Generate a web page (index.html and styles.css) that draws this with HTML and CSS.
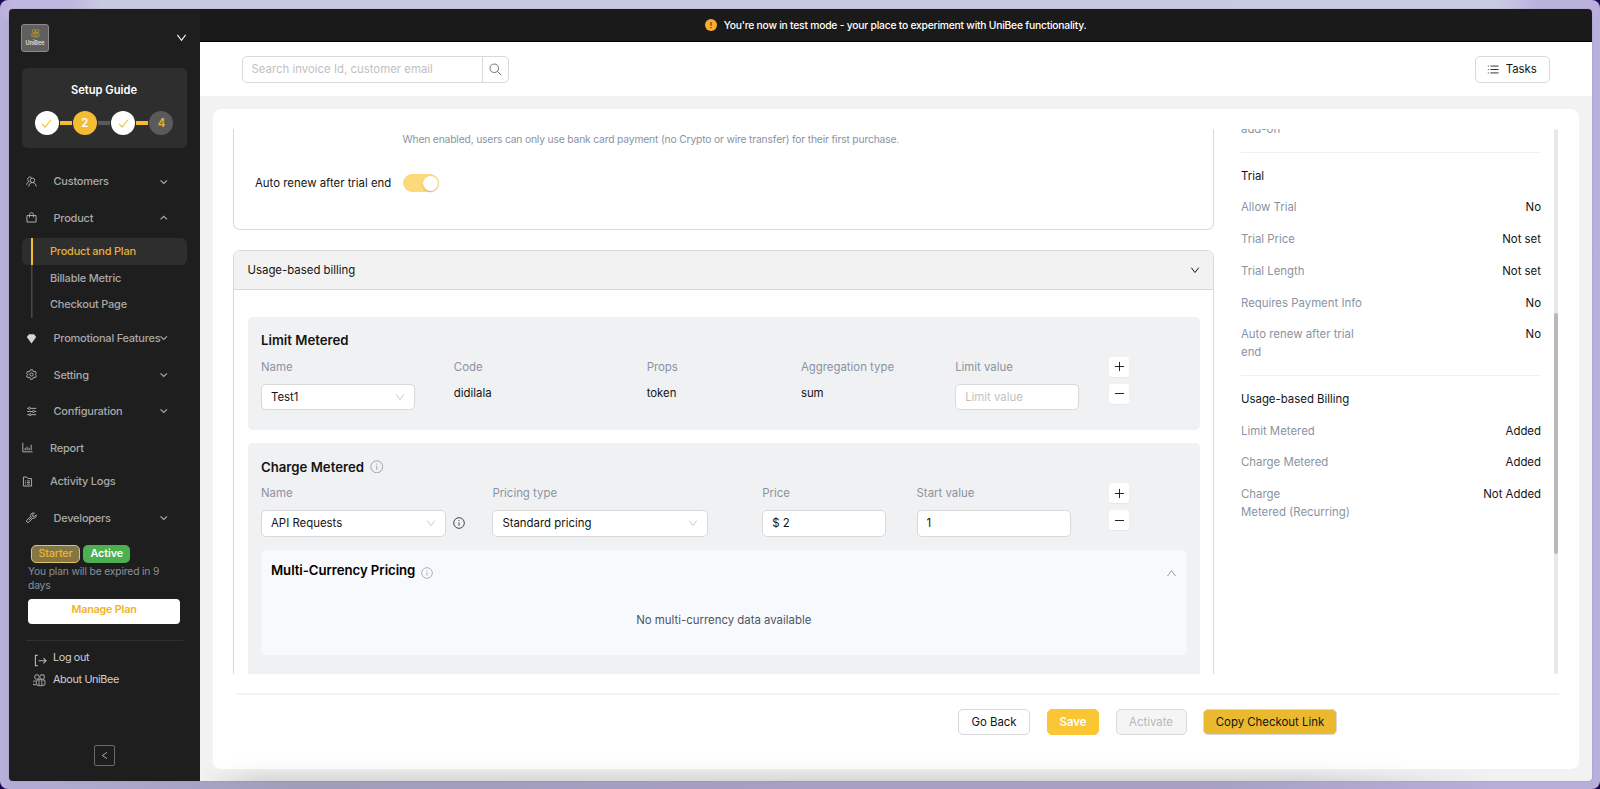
FILE: index.html
```html
<!DOCTYPE html>
<html lang="en">
<head>
  <meta charset="UTF-8">
  <meta name="viewport" content="width=device-width, initial-scale=1.0">
  <title>UniBee - Product and Plan</title>
  <link rel="stylesheet" href="styles.css">
</head>
<body>

  <!-- Shared icons -->
  <svg class="sprite" width="0" height="0">
    <symbol id="i-down" viewBox="0 0 12 12"><path d="M1.5 3.2 6 9l4.500-5.800"/></symbol>
    <symbol id="i-up" viewBox="0 0 12 12"><path d="M1.500 8.800 6 3l4.500 5.800"/></symbol>
    <symbol id="i-menu-down" viewBox="0 0 10 10"><path d="M1.600 3.500 5 6.700l3.400-3.200"/></symbol>
    <symbol id="i-menu-up" viewBox="0 0 10 10"><path d="M1.600 6.700 5 3.500l3.400 3.200"/></symbol>
    <symbol id="i-check" viewBox="0 0 12 12"><path d="m1.200 6.300 3.300 3.600 6.300-8"/></symbol>
    <symbol id="i-info" viewBox="0 0 14 14"><circle cx="7" cy="7" r="6.200"/><path d="M7 6.200v4M7 3.700v1.200"/></symbol>
    <symbol id="i-plus" viewBox="0 0 12 12"><path d="M1 6h10M6 1v10"/></symbol>
    <symbol id="i-minus" viewBox="0 0 12 12"><path d="M1 6h10"/></symbol>
    <symbol id="i-bee" viewBox="0 0 14 14"><circle cx="4.200" cy="3.200" r="2.500"/><circle cx="9.800" cy="3.200" r="2.500"/><rect x="3.500" y="6" width="9.500" height="6.500" rx="3"/><path d="M6.500 6v6.500M9.500 6v6.500M3.500 7.500H1.500a1 1 0 0 0 0 4h2"/></symbol>
  </svg>

  <div class="window">

    <!-- Sidebar -->
    <aside class="sidebar">
      <div class="brand">
        <div class="logo">
          <svg><use href="#i-bee"/></svg>
          <span>UniBee</span>
        </div>
        <svg class="brand-arrow"><use href="#i-down"/></svg>
      </div>

      <div class="setup">
        <h2>Setup Guide</h2>
        <div class="steps">
          <span class="step done"><svg><use href="#i-check"/></svg></span>
          <i class="bar on"></i>
          <span class="step current">2</span>
          <i class="bar"></i>
          <span class="step done"><svg><use href="#i-check"/></svg></span>
          <i class="bar on"></i>
          <span class="step todo">4</span>
        </div>
      </div>

      <nav class="menu">
        <a class="group">
          <svg class="icon" viewBox="0 0 14 14"><circle cx="8.200" cy="5.500" r="2.800"/><path d="M3.500 13.300c.3-3 2-5 4.700-5s4.500 2 4.800 5M3.600 7.400C2 8 1 9.300.8 11.200M4.300 7.200C3 6.800 2.200 5.700 2.200 4.200c0-1.800 1.200-3 2.900-3 .8 0 1.500.3 2 .8"/></svg>
          <span>Customers</span>
          <svg class="arrow"><use href="#i-menu-down"/></svg>
        </a>
        <a class="group">
          <svg class="icon" viewBox="0 0 14 14"><path d="M1.200 4.500h11.600v8.300H1.200zM4.500 6.800V3.200c0-1.300 1-2.200 2.500-2.200s2.500.9 2.500 2.200v3.600"/></svg>
          <span>Product</span>
          <svg class="arrow"><use href="#i-menu-up"/></svg>
        </a>
        <div class="submenu">
          <a class="active">Product and Plan</a>
          <a>Billable Metric</a>
          <a>Checkout Page</a>
        </div>
        <a class="group">
          <svg class="icon gem" viewBox="0 0 14 14"><path d="M3.800 1.500h6.400L13 5 7 13.500 1 5z"/></svg>
          <span>Promotional Features</span>
          <svg class="arrow"><use href="#i-menu-down"/></svg>
        </a>
        <a class="group">
          <svg class="icon" viewBox="0 0 14 14"><path d="m5.500 1-.4 1.900-1.200.7L2 3 .7 5.400l1.500 1.200v1L.7 8.700 2 11l1.900-.6 1.200.7.4 1.900h3l.4-1.900 1.200-.7 1.900.6 1.300-2.300-1.500-1.200v-1l1.500-1.100L12 3l-1.900.6-1.200-.7L8.500 1z"/><circle cx="7" cy="7" r="2"/></svg>
          <span>Setting</span>
          <svg class="arrow"><use href="#i-menu-down"/></svg>
        </a>
        <a class="group">
          <svg class="icon" viewBox="0 0 14 14"><path d="M1.500 3H3M6 3h7M1.500 7H8M11 7h2M1.500 11H4M7 11h6"/><circle cx="4.400" cy="3" r="1.300"/><circle cx="9.500" cy="7" r="1.300"/><circle cx="5.500" cy="11" r="1.300"/></svg>
          <span>Configuration</span>
          <svg class="arrow"><use href="#i-menu-down"/></svg>
        </a>
        <div class="singles">
          <a class="single">
            <svg class="icon" viewBox="0 0 14 14"><path d="M1 1v11.500h12.500M4 10.500V7.500M6.500 10.500V6M9 10.500V7.500M11.700 10.500V3.500"/></svg>
            <span>Report</span>
          </a>
          <a class="single">
            <svg class="icon" viewBox="0 0 14 14"><path d="M1.800 12.800V1.300H6l1.600 2h4.600v9.500zM4 6.200h1M6.500 6.200H10M4 8.300h1M6.500 8.300H10M4 10.400h1M6.500 10.400H10"/></svg>
            <span>Activity Logs</span>
          </a>
        </div>
        <a class="group">
          <svg class="icon" viewBox="0 0 14 14"><path d="M12.900 3.600 10.700 5.700 8.800 5.400 8.400 3.500l2.200-2.200C8.500.700 6.600 1.700 6.100 3.400c-.2.800-.1 1.400.1 2L1.200 10.300a1.700 1.700 0 0 0 2.500 2.500l5-5c2.600.9 5-1.600 4.200-4.200z"/><path d="m4 10 4-4"/></svg>
          <span>Developers</span>
          <svg class="arrow"><use href="#i-menu-down"/></svg>
        </a>
      </nav>

      <div class="plan">
        <div class="tags">
          <span class="tag starter">Starter</span>
          <span class="tag live">Active</span>
        </div>
        <p>You plan will be expired in 9 days</p>
        <button class="manage">Manage Plan</button>
      </div>

      <div class="account">
        <a><svg class="icon" viewBox="0 0 14 14"><path d="M4 1.500H1.500v11H4M5 7.200h8M10.200 4.400 13 7.200 10.200 10"/></svg><span>Log out</span></a>
        <a><svg class="icon bee"><use href="#i-bee"/></svg><span>About UniBee</span></a>
      </div>

      <button class="collapse"><svg viewBox="0 0 10 10"><path d="M7.800 1.500 2.500 5l5.300 3.500"/></svg></button>
    </aside>

    <!-- Main area -->
    <div class="main">
      <div class="notice">
        <svg viewBox="0 0 12 12"><circle cx="6" cy="6" r="6"/><path d="M6 3v3.700M6 7.900v1.300"/></svg>
        <span>You're now in test mode - your place to experiment with UniBee functionality.</span>
      </div>

      <header class="topbar">
        <div class="search">
          <input type="text" placeholder="Search invoice Id, customer email">
          <button><svg viewBox="0 0 14 14"><circle cx="5.700" cy="5.700" r="4.600"/><path d="m9 9 4.200 4.200"/></svg></button>
        </div>
        <button class="btn tasks">
          <svg viewBox="0 0 14 12"><path d="M4 2h9.500M4 6h9.500M4 10h9.500M1 2h1M1 6h1M1 10h1"/></svg>
          <span>Tasks</span>
        </button>
      </header>

      <main class="content">
        <div class="card">
          <div class="scroller">

            <div class="form">
              <section class="panel trial-panel">
                <p class="hint">When enabled, users can only use bank card payment (no Crypto or wire transfer) for their first purchase.</p>
                <div class="switch-row">
                  <label>Auto renew after trial end</label>
                  <span class="switch"></span>
                </div>
              </section>

              <section class="panel usage-panel">
                <div class="panel-head">
                  <span>Usage-based billing</span>
                  <svg><use href="#i-down"/></svg>
                </div>

                <div class="metered limit">
                  <h3>Limit Metered</h3>
                  <div class="grid">
                    <div class="field c5"><label>Name</label>
                      <div class="select w4">Test1<svg><use href="#i-down"/></svg></div></div>
                    <div class="field c5"><label>Code</label><span>didilala</span></div>
                    <div class="field c4"><label>Props</label><span>token</span></div>
                    <div class="field c4"><label>Aggregation type</label><span>sum</span></div>
                    <div class="field c4"><label>Limit value</label>
                      <input class="short" type="text" placeholder="Limit value"></div>
                    <div class="ops c2">
                      <button><svg><use href="#i-plus"/></svg></button>
                      <button><svg><use href="#i-minus"/></svg></button>
                    </div>
                  </div>
                </div>

                <div class="metered charge">
                  <h3>Charge Metered <svg class="info"><use href="#i-info"/></svg></h3>
                  <div class="grid">
                    <div class="field c6"><label>Name</label>
                      <div class="with-info">
                        <div class="select name">API Requests<svg><use href="#i-down"/></svg></div>
                        <svg class="info dark"><use href="#i-info"/></svg>
                      </div></div>
                    <div class="field c7"><label>Pricing type</label>
                      <div class="select pricing">Standard pricing<svg><use href="#i-down"/></svg></div></div>
                    <div class="field c4"><label>Price</label>
                      <input class="short" type="text" value="$ 2"></div>
                    <div class="field c5"><label>Start value</label>
                      <input class="w4" type="text" value="1"></div>
                    <div class="ops c2">
                      <button><svg><use href="#i-plus"/></svg></button>
                      <button><svg><use href="#i-minus"/></svg></button>
                    </div>
                  </div>

                  <div class="currency">
                    <div class="currency-head">
                      <h3>Multi-Currency Pricing <svg class="info"><use href="#i-info"/></svg></h3>
                      <svg class="fold"><use href="#i-up"/></svg>
                    </div>
                    <p>No multi-currency data available</p>
                  </div>
                </div>
              </section>
            </div>

            <!-- Plan summary -->
            <div class="summary">
              <div class="row cut"><span>add-on</span></div>
              <hr>
              <h4>Trial</h4>
              <div class="row"><span>Allow Trial</span><b>No</b></div>
              <div class="row"><span>Trial Price</span><b>Not set</b></div>
              <div class="row"><span>Trial Length</span><b>Not set</b></div>
              <div class="row"><span>Requires Payment Info</span><b>No</b></div>
              <div class="row"><span>Auto renew after trial end</span><b>No</b></div>
              <hr>
              <h4>Usage-based Billing</h4>
              <div class="row"><span>Limit Metered</span><b>Added</b></div>
              <div class="row"><span>Charge Metered</span><b>Added</b></div>
              <div class="row"><span>Charge Metered&nbsp;(Recurring)</span><b>Not Added</b></div>
            </div>

            <div class="scrollbar"><div class="thumb"></div></div>
          </div>

          <footer class="actions">
            <button class="btn back">Go Back</button>
            <button class="btn save">Save</button>
            <button class="btn activate" disabled>Activate</button>
            <button class="btn copy">Copy Checkout Link</button>
          </footer>
        </div>
      </main>
    </div>

    <div class="shade"></div>
  </div>

</body>
</html>
```

FILE: styles.css
```css
* {
  box-sizing: border-box;
  margin: 0;
  padding: 0;
}

html {
  background: #1b0457;
}

body {
  height: 789px;
  padding: 9px 8.500px 8px 9px;
  overflow: hidden;
  border-radius: 8px;
  font-family: Inter, "Liberation Sans", sans-serif;
  font-size: 11.400px;
  line-height: 18px;
  color: #141414;
  background: linear-gradient(90deg, #b9b1da 0, transparent 12px, transparent 1588px, #b8b0dc 1600px),
    linear-gradient(90deg, #c0b7df 0, #c0b7df 70px, #c8c8e2 100px, #c9c9e3 1500px, #bab1dd 1540px) top / 100% 20px no-repeat,
    linear-gradient(90deg, #b3add6 0, #a09dba 300px, #a79fc4 800px, #a7a0c4 1200px, #b7aed9 1500px);
}

button, input {
  font: inherit;
  letter-spacing: inherit;
  color: inherit;
}

svg {
  display: block;
  flex: none;
  fill: none;
  stroke: currentColor;
  stroke-width: 1;
}

.sprite {
  position: absolute;
}

.window {
  position: relative;
  display: flex;
  height: 772px;
  border-radius: 4px;
  overflow: hidden;
  box-shadow: 0 0 1px 0 rgba(0, 0, 0, 0.4);
}

/* Sidebar */
.sidebar {
  width: 191px;
  flex: none;
  background: #1e1e1e;
  color: #a9a9a9;
  display: flex;
  flex-direction: column;
  padding: 15px 13.500px 0 12.500px;
}

.brand {
  display: flex;
  justify-content: space-between;
  height: 44px;
}

.logo {
  width: 28px;
  height: 28px;
  margin-left: -0.500px;
  border: 1px solid #8a8a8a;
  border-radius: 3px;
  background: #5f5f5f;
  color: #e0e0e0;
  display: flex;
  flex-direction: column;
  align-items: center;
  padding-top: 4px;
  font-size: 5.500px;
  font-weight: 600;
  line-height: 10px;
}

.logo svg {
  width: 9px;
  height: 9px;
  color: #c9a928;
}

.brand-arrow {
  width: 11px;
  height: 11px;
  margin-top: 8px;
  color: #f0f0f0;
  stroke-width: 1.300;
}

.setup {
  height: 80px;
  border-radius: 6px;
  background: #2e2e2e;
  padding: 13px 13px 0;
  flex: none;
}

.setup h2 {
  font-size: 11.200px;
  font-weight: 600;
  line-height: 18px;
  color: #fff;
  text-align: center;
}

.steps {
  display: flex;
  align-items: center;
  justify-content: space-between;
  margin-top: 12px;
}

.step {
  width: 24px;
  height: 24px;
  border-radius: 50%;
  display: flex;
  align-items: center;
  justify-content: center;
  font-weight: 600;
}

.step svg {
  width: 11px;
  height: 11px;
  color: #f4bc33;
  stroke-width: 1.200;
}

.done {
  background: #fff;
}

.current {
  background: #f4bc33;
  color: #fff;
}

.todo {
  background: #5a5a5a;
  color: #e5b23a;
}

.bar {
  width: 12px;
  height: 4px;
  background: #5a5a5a;
}

.bar.on {
  background: #f4bc33;
}

.menu {
  margin-top: 15px;
  font-size: 11px;
  font-weight: 500;
  letter-spacing: -0.230px;
}

.group, .single {
  display: flex;
  align-items: center;
  height: 36.500px;
}

.icon {
  width: 11px;
  height: 11px;
  stroke-width: 1.200;
  color: #b5b5b5;
}

.group .icon {
  margin: 0 17px 0 4px;
}

.group span {
  width: 105.500px;
  white-space: nowrap;
}

.arrow {
  width: 9.500px;
  height: 9.500px;
  stroke-width: 1.300;
}

.group .gem {
  fill: #d6d6d6;
  stroke: none;
}

.submenu {
  margin: 1.900px 0 2px;
}

.submenu a {
  display: block;
  height: 26.700px;
  line-height: 27px;
  padding-left: 28.500px;
  background: linear-gradient(#484848, #484848) 9.500px 0 / 1.500px 100% no-repeat;
}

.submenu .active {
  color: #e5b23a;
  border-radius: 6px;
  background: linear-gradient(#f4bc33, #f4bc33) 9.500px 0 / 2px 100% no-repeat, #2e2e2e;
}

.singles {
  margin: 1.700px 0;
}

.single {
  height: 33.300px;
}

.single .icon {
  margin: 0 17.500px 0 0;
}

.plan {
  padding: 9.500px 6px 0;
}

.tags {
  display: flex;
  gap: 3px;
  margin-left: 3px;
}

.tag {
  height: 18px;
  border-radius: 5px;
  font-size: 10.800px;
  font-weight: 600;
  line-height: 17px;
  letter-spacing: -0.200px;
  padding: 0 7px;
}

.starter {
  color: #eeb52f;
  background: #857745;
  border: 1px solid #ddc26a;
  line-height: 15px;
  font-weight: 500;
}

.live {
  letter-spacing: -0.080px;
  background: #4caf50;
  color: #fff;
}

.plan p {
  font-size: 10.300px;
  line-height: 13.500px;
  letter-spacing: -0.160px;
  color: #8b909c;
  margin: 2px 0 0 0.500px;
  width: 140px;
}

.manage {
  display: block;
  width: 152px;
  height: 25px;
  margin: 6.500px 0 0 0.500px;
  padding-bottom: 2px;
  border: 0;
  border-radius: 4px;
  background: #fff;
  color: #f0b41f;
  font-size: 10.800px;
  letter-spacing: -0.200px;
  font-weight: 600;
}

.account {
  border-top: 1px solid #2f2f2f;
  margin: 16.500px 4px 0;
  padding-top: 6px;
  color: #d0d0d0;
  font-size: 10.800px;
  letter-spacing: -0.350px;
}

.account a {
  display: flex;
  align-items: center;
  height: 21.500px;
}

.account .icon {
  width: 13px;
  height: 13px;
  margin: 4px 6.500px 0 8px;
}

.account .bee {
  color: #8f8f8f;
  margin-left: 7px;
  margin-right: 7.500px;
  margin-top: 2px;
}

.collapse {
  width: 21px;
  height: 21px;
  margin: auto auto 15px 72.500px;
  border: 1px solid #646b70;
  border-radius: 2px;
  background: none;
  color: #b5b5b5;
  display: flex;
  align-items: center;
  justify-content: center;
}

.collapse svg {
  width: 9px;
  height: 9px;
}

/* Main area */
.main {
  flex: 1;
  display: flex;
  flex-direction: column;
  background: #f2f2f2;
}

.notice {
  height: 34px;
  background: #1a1a1a;
  border-bottom: 1px solid #000;
  color: #fff;
  font-size: 10.300px;
  font-weight: 500;
  letter-spacing: -0.220px;
  display: flex;
  align-items: center;
  justify-content: center;
  gap: 6.500px;
}

.notice svg {
  width: 12px;
  height: 12px;
  fill: #fbab2b;
  stroke: none;
}

.notice path {
  stroke: #5a3d10;
  stroke-width: 1.200;
}

.topbar {
  height: 54px;
  flex: none;
  background: #fff;
  display: flex;
  align-items: center;
  justify-content: space-between;
  padding: 0.500px 42px 0 41.500px;
}

.search {
  display: flex;
  width: 267px;
  height: 26.500px;
  border: 1px solid #d9d9d9;
  border-radius: 5px;
}

.search input {
  flex: 1;
  min-width: 0;
  border: 0;
  background: none;
  padding: 0 9px;
}

::placeholder {
  color: #bfbfbf;
}

.search button {
  width: 25.500px;
  border: 0;
  border-left: 1px solid #d9d9d9;
  background: none;
  display: flex;
  align-items: center;
  justify-content: center;
  color: #6a6a6a;
}

.search svg {
  width: 13px;
  height: 13px;
}

.btn {
  height: 26.500px;
  border: 1px solid #d9d9d9;
  border-radius: 5px;
  background: #fff;
  display: flex;
  align-items: center;
  justify-content: center;
}

.tasks {
  width: 75px;
  gap: 6.500px;
}

.tasks svg {
  width: 12px;
  height: 11px;
}

.content {
  flex: 1;
  padding: 13px 13px 12px;
}

.card {
  height: 660px;
  border-radius: 8px;
  background: #fff;
  padding: 20px 20px 0;
}

.scroller {
  display: flex;
  height: 545px;
  overflow: hidden;
}

.form {
  width: 981px;
  flex: none;
}

.panel {
  border: 1px solid #d9d9d9;
  border-radius: 7px;
}

.trial-panel {
  height: 101px;
  border-top: 0;
  border-radius: 0 0 7px 7px;
}

.hint {
  font-size: 10.300px;
  line-height: 20px;
  letter-spacing: -0.170px;
  margin-left: 168.500px;
  color: #8a93a3;
}

.switch-row {
  display: flex;
  align-items: center;
  margin-top: 24px;
  padding-left: 21px;
  height: 20px;
}

.switch-row label {
  width: 147.500px;
}

.switch {
  width: 36.500px;
  height: 18px;
  border-radius: 9px;
  background: #fcd97c;
  display: flex;
  justify-content: flex-end;
  padding: 1.500px;
}

.switch::after {
  content: "";
  width: 15px;
  height: 15px;
  border-radius: 50%;
  background: #fff;
  box-shadow: 0 1px 2px rgba(0, 35, 11, 0.2);
}

.usage-panel {
  margin-top: 20px;
  height: 500px;
}

.panel-head {
  display: flex;
  align-items: center;
  justify-content: space-between;
  height: 39px;
  padding: 0 13px 0 13.500px;
  background: #f2f2f2;
  border-bottom: 1px solid #d9d9d9;
  border-radius: 7px 7px 0 0;
}

.panel-head svg {
  width: 10px;
  height: 10px;
  stroke-width: 1.200;
}

.metered {
  margin: 0 13.500px 13px 13.500px;
  padding: 13.500px 13px 0 13.500px;
  background: #f0f1f3;
  border-radius: 5px;
}

.limit {
  margin-top: 26.500px;
  height: 113.500px;
}

.charge {
  height: 260px;
}

h3 {
  display: flex;
  align-items: center;
  gap: 6px;
  height: 20px;
  font-size: 13.200px;
  font-weight: 600;
}

.info {
  width: 13.500px;
  height: 13.500px;
  color: #9aa1ae;
}

/* 24 column form grid */
.grid {
  display: grid;
  grid-template-columns: repeat(24, 1fr);
  margin-top: 6.500px;
}

.c2 { grid-column: span 2; }
.c4 { grid-column: span 4; }
.c5 { grid-column: span 5; }
.c6 { grid-column: span 6; }
.c7 { grid-column: span 7; }

.field label {
  display: block;
  height: 27px;
  line-height: 20px;
  color: #8a93a3;
}

.field > span {
  display: block;
  line-height: 19px;
}

.field input, .select {
  height: 26.500px;
  border: 1px solid #d9d9d9;
  border-radius: 5px;
  background: #fff;
  padding: 0 9px;
}

.select {
  display: flex;
  align-items: center;
  justify-content: space-between;
}

.select svg {
  width: 10px;
  height: 10px;
  color: #bfbfbf;
}

.w4 { width: 154px; }
.short { width: 123.500px; }
.name { width: 185px; }
.pricing { width: 216px; }

.with-info {
  display: flex;
  align-items: center;
  gap: 6.500px;
}

.info.dark {
  width: 12px;
  height: 12px;
  color: #2b2b2b;
}

.ops button {
  width: 20px;
  height: 20px;
  margin-bottom: 7px;
  border: 0;
  border-radius: 3px;
  background: #fff;
  display: flex;
  align-items: center;
  justify-content: center;
  box-shadow: 0 1px 1px rgba(0, 0, 0, 0.04);
}

.ops svg {
  width: 11px;
  height: 11px;
}

.currency {
  height: 105px;
  margin-top: 13px;
  padding: 10px;
  border-radius: 5px;
  background: #f8f9fc;
}

.currency h3 {
  color: #000;
  letter-spacing: -0.050px;
}

.charge .ops {
  height: 54px;
}

.currency-head {
  display: flex;
  justify-content: space-between;
}

.currency .info {
  width: 12px;
  height: 12px;
  margin-top: 5px;
}

.fold {
  width: 11px;
  height: 11px;
  margin-top: 8px;
  color: #8f95a1;
}

.currency p {
  margin-top: 30.500px;
  text-align: center;
  color: #4b5566;
}

/* Plan summary */
.summary {
  width: 300px;
  margin-left: 27px;
  line-height: 18.200px;
}

.summary hr {
  border: 0;
  border-top: 1px solid #f0f0f0;
}

.summary h4 {
  font-size: 11.400px;
  font-weight: 400;
  margin: 13.700px 0 13.500px;
}

.row {
  display: flex;
  justify-content: space-between;
  margin-bottom: 13.500px;
}

.row span {
  width: 125px;
  color: #8a93a3;
}

.row b {
  font-weight: 400;
}

.cut {
  margin-top: -8.700px;
}

.scrollbar {
  width: 4px;
  margin-left: 13px;
  border-radius: 2px;
  background: #e8e8e8;
}

.thumb {
  height: 241px;
  margin-top: 184px;
  border-radius: 2px;
  background: #b9b9b9;
}

/* Footer buttons */
.actions {
  display: flex;
  gap: 17px;
  height: 60px;
  margin: 19px 0 0 3px;
  padding: 13.500px 0 0 722px;
  border-top: 2px solid #f3f3f3;
}

.back { width: 72px; }

.save {
  width: 52px;
  color: #fff;
  font-weight: 600;
  background: #fbc634;
  border-color: #fbc634;
}

.activate {
  width: 71px;
  margin-left: -0.500px;
  background: #f5f5f5;
  color: #b8b8b8;
}

.copy {
  width: 134px;
  margin-left: -0.500px;
  background: #eab92f;
}

/* Soft shadow along the bottom edge */
.shade {
  position: absolute;
  left: 191px;
  right: 90px;
  bottom: 0;
  height: 24px;
  background: linear-gradient(rgba(0, 0, 0, 0), rgba(0, 0, 0, 0.025) 50%, rgba(0, 0, 0, 0.11));
  -webkit-mask-image: linear-gradient(90deg, transparent, #000 60px, #000 85%, transparent);
  mask-image: linear-gradient(90deg, transparent, #000 60px, #000 85%, transparent);
}
```
